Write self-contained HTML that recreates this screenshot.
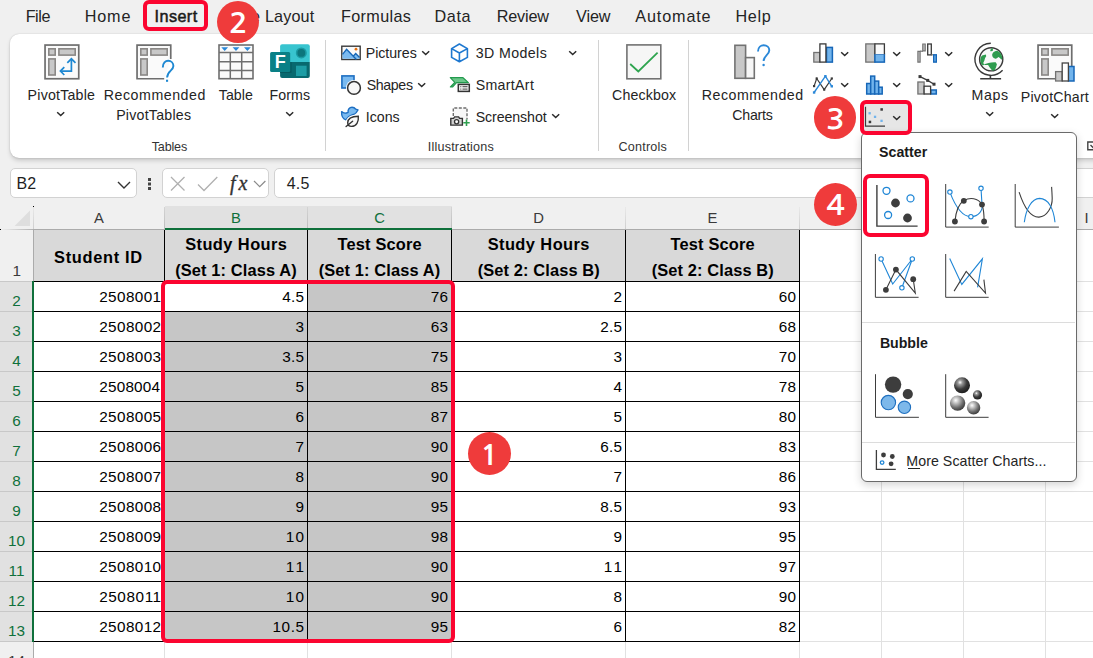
<!DOCTYPE html>
<html><head><meta charset="utf-8"><title>Excel</title>
<style>
html,body{margin:0;padding:0}
body{width:1093px;height:658px;overflow:hidden;position:relative;background:#f0f0f0;font-family:"Liberation Sans",sans-serif;color:#242424}
.a{position:absolute}
.t{position:absolute;white-space:nowrap;line-height:1}
.badge{position:absolute;border-radius:50%;background:#ef3b3b;color:#fff;text-align:center;font-family:"Liberation Sans",sans-serif}
.badge b{position:absolute;left:0;right:0;top:1.8px;font-family:"NanumGothic","Liberation Sans",sans-serif;font-weight:bold;font-size:28.5px;transform:scaleX(1.09)}
.red{position:absolute;box-sizing:border-box;border:4px solid #fb0530;border-radius:6px}
</style></head><body>

<div class="a" style="left:10px;top:33.500px;width:1100px;height:124.700px;background:#fff;border-radius:9px;box-shadow:0 0 1.5px rgba(0,0,0,.22),0 3px 5px -1px rgba(0,0,0,.20)"></div>
<div class="a" style="left:325.0px;top:40px;width:1px;height:111px;background:#d2d2d2"></div>
<div class="a" style="left:598.0px;top:40px;width:1px;height:111px;background:#d2d2d2"></div>
<div class="a" style="left:688.0px;top:40px;width:1px;height:111px;background:#d2d2d2"></div>
<svg class="a" style="left:40px;top:40px" width="44" height="44" viewBox="40 40 44 44">
<rect x="45.05" y="45.050" width="33.700" height="33.700" fill="#fafafa" stroke="#6e6e6e" stroke-width="1.700"/>
<rect x="48.8" y="48.800" width="6.400" height="6.300" fill="#c8c8c8" stroke="#8a8886" stroke-width="1.600"/><rect x="58.9" y="48.800" width="16.300" height="6.300" fill="#c8c8c8" stroke="#8a8886" stroke-width="1.600"/><rect x="48.8" y="58.900" width="6.400" height="16.100" fill="#c8c8c8" stroke="#8a8886" stroke-width="1.600"/>
<path d="M71.4 59.500 V71.100 H60.800" fill="none" stroke="#1e88d2" stroke-width="1.700"/>
<path d="M67.3 62.900 L71.400 58.800 L75.500 62.900 M64.300 67.200 L60.400 71.100 L64.300 75" fill="none" stroke="#1e88d2" stroke-width="1.700"/>
</svg>
<svg class="a" style="left:56.3px;top:110.9px" width="10" height="6" viewBox="0 0 10 6"><path d="M1.2 1.2 L4.7 4.5 L8.2 1.2" fill="none" stroke="#2a2a2a" stroke-width="1.5"/></svg>
<svg class="a" style="left:132px;top:40px" width="48" height="48" viewBox="132 40 48 48">
<path d="M170.75 59 V45.050 H137.050 V78.750 H164.200" fill="#fafafa" stroke="#6e6e6e" stroke-width="1.700"/>
<rect x="140.8" y="48.800" width="6.400" height="6.300" fill="#c8c8c8" stroke="#8a8886" stroke-width="1.600"/><rect x="150.9" y="48.800" width="16.300" height="6.300" fill="#c8c8c8" stroke="#8a8886" stroke-width="1.600"/><rect x="140.8" y="58.900" width="6.400" height="16.100" fill="#c8c8c8" stroke="#8a8886" stroke-width="1.600"/>
<path d="M162.800 67.400 C162.800 63 165.500 60.800 168.200 60.800 C171.300 60.800 173.400 63.200 173.400 66 C173.400 70.500 167.100 71 167.100 77.600" fill="none" stroke="#1e88d2" stroke-width="1.900"/>
<rect x="166" y="79.700" width="2.100" height="2.100" fill="#1e88d2"/>
</svg>
<svg class="a" style="left:214px;top:40px" width="44" height="44" viewBox="214 40 44 44">
<rect x="219" y="45" width="34" height="33.700" fill="#fafafa" stroke="#6e6e6e" stroke-width="1.600"/>
<path d="M219 52.600 H253 M219 61.700 H253 M219 70.400 H253 M230.300 52.600 V78.700 M241.700 52.600 V78.700" stroke="#6e6e6e" stroke-width="1.500" fill="none"/>
<path d="M221.300 47.300 h6.800 l-3.400 3.600z M232.600 47.300 h6.800 l-3.400 3.600z M244 47.300 h6.800 l-3.400 3.600z" fill="#2b88d8"/>
</svg>
<svg class="a" style="left:268px;top:42px" width="46" height="40" viewBox="268 42 46 40">
<path d="M280.1 46.200 a2 2 0 0 1 2 -2 h25.700 a2 2 0 0 1 2 2 v15.800 h-29.700z" fill="#38c4cf"/>
<path d="M280.1 62 h29.700 v14.100 a2 2 0 0 1 -2 2 h-25.700 a2 2 0 0 1 -2 -2z" fill="#08696f"/>
<rect x="280.1" y="62" width="11.500" height="11" fill="#065a60"/>
<circle cx="301.300" cy="52.900" r="5.500" fill="#1a9aa3"/>
<circle cx="301.300" cy="52.900" r="3.900" fill="#0c757c"/>
<rect x="296" y="65.700" width="10.600" height="10.300" fill="#1d9da5"/>
<rect x="270.100" y="52.100" width="20.100" height="19.800" rx="1.500" fill="#0a8086"/>
<text x="280.300" y="68.200" font-family="Liberation Sans, sans-serif" font-weight="bold" font-size="18" fill="#fff" text-anchor="middle">F</text>
</svg>
<svg class="a" style="left:284.7px;top:110.9px" width="10" height="6" viewBox="0 0 10 6"><path d="M1.2 1.2 L4.7 4.5 L8.2 1.2" fill="none" stroke="#2a2a2a" stroke-width="1.5"/></svg>
<svg class="a" style="left:339px;top:43px" width="24" height="20" viewBox="339 43 24 20">
<rect x="341.8" y="46.200" width="18.400" height="13.300" fill="#fafafa" stroke="#3a3a3a" stroke-width="1.400"/>
<path d="M342.5 54.400 L346.600 49.300 L353.600 56.600 L355.700 53.600 L359.500 57.600 V58.800 H342.500z" fill="#7abaf0"/>
<path d="M342.5 54.400 L346.600 49.300 L356.400 59.400 M353.200 56.200 L355.700 53.500 L359.600 57.500" fill="none" stroke="#1667b7" stroke-width="1.400"/>
<circle cx="356" cy="49.200" r="1.400" fill="#e8700f"/>
</svg>
<svg class="a" style="left:421.0px;top:49.6px" width="10" height="6" viewBox="0 0 10 6"><path d="M1.2 1.2 L4.7 4.5 L8.2 1.2" fill="none" stroke="#2a2a2a" stroke-width="1.5"/></svg>
<svg class="a" style="left:339px;top:73px" width="24" height="24" viewBox="339 73 24 24">
<rect x="341.9" y="75.900" width="12.100" height="12.100" fill="#7abaf0" stroke="#1e6fc2" stroke-width="1.600"/>
<circle cx="354" cy="87.900" r="8" fill="#fff"/>
<circle cx="354" cy="87.900" r="6.400" fill="#f7f7f7" stroke="#333" stroke-width="1.500"/>
</svg>
<svg class="a" style="left:417.0px;top:81.6px" width="10" height="6" viewBox="0 0 10 6"><path d="M1.2 1.2 L4.7 4.5 L8.2 1.2" fill="none" stroke="#2a2a2a" stroke-width="1.5"/></svg>
<svg class="a" style="left:339px;top:104px" width="24" height="26" viewBox="339 104 24 26">
<path d="M341.6 111.600 C343 113 345.500 113.600 348.100 112.300 C347.600 109.500 349.500 107.300 352 107.300 C353.800 107.300 355 108.200 355.800 109.200 L358 109.900 L356.200 112.600 C355.300 113.600 354 114.300 352.500 114.700 C350 115.500 347.500 117 345.800 119.800 C343 119 341.400 116.500 341.600 111.600z" fill="#7abaf0" stroke="#1e6fc2" stroke-width="1.400" stroke-linejoin="round"/>
<path d="M358.300 116.300 C358.900 121.500 356.500 126.400 351.500 126.400 C349 126.400 347.700 125.200 347.700 122.800 C347.700 118.500 352.500 116.500 358.300 116.300z" fill="#fff" stroke="#fff" stroke-width="3.500"/>
<path d="M358.300 116.300 C358.900 121.500 356.500 126.400 351.500 126.400 C349 126.400 347.700 125.200 347.700 122.800 C347.700 118.500 352.500 116.500 358.300 116.300z M346.100 126.500 L352.600 121.200" fill="#fafafa" stroke="#333" stroke-width="1.400" stroke-linecap="round"/>
</svg>
<svg class="a" style="left:448px;top:41px" width="23" height="24" viewBox="448 41 23 24">
<path d="M459.4 44 L467.400 48.600 V57.400 L459.400 61.800 L451.600 57.400 V48.600z M451.600 48.600 L459.400 53 L467.400 48.600 M459.400 53 V61.800" fill="#fff" stroke="#1e78d0" stroke-width="1.600" stroke-linejoin="round"/>
</svg>
<svg class="a" style="left:568.4px;top:50.1px" width="10" height="6" viewBox="0 0 10 6"><path d="M1.2 1.2 L4.7 4.5 L8.2 1.2" fill="none" stroke="#2a2a2a" stroke-width="1.5"/></svg>
<svg class="a" style="left:448px;top:74px" width="25" height="22" viewBox="448 74 25 22">
<path d="M450.300 77.700 H463 L468.400 82.600 H456.500 L452.500 87 H450.400 L454.800 82.300z" fill="#6cc78a" stroke="#239a4e" stroke-width="1.200" stroke-linejoin="round"/>
<rect x="458.300" y="84.400" width="11" height="7" fill="#f2f2f2" stroke="#333" stroke-width="1.500"/>
<path d="M460.300 86.700 h1 M462.500 86.700 h5 M460.300 89.100 h1 M462.500 89.100 h5" stroke="#444" stroke-width="1"/>
</svg>
<svg class="a" style="left:448px;top:104px" width="25" height="26" viewBox="448 104 25 26">
<path d="M453.300 116 V108 H467 V119.500" fill="#f7f7f7" stroke="#6e6e6e" stroke-width="1.400" stroke-dasharray="3 1.500"/>
<path d="M450.800 118.400 h2.800 l1 -1.500 h4 l1 1.500 h2.800 v6.700 h-11.600z" fill="#d2d2d2" stroke="#333" stroke-width="1.400"/>
<circle cx="456.600" cy="121.800" r="2.100" fill="#fff" stroke="#333" stroke-width="1.300"/>
<path d="M466.500 119.600 v6.400 M463.300 122.800 h6.400" stroke="#2e9f4f" stroke-width="1.600"/>
</svg>
<svg class="a" style="left:551.0px;top:113.2px" width="10" height="6" viewBox="0 0 10 6"><path d="M1.2 1.2 L4.7 4.5 L8.2 1.2" fill="none" stroke="#2a2a2a" stroke-width="1.5"/></svg>
<svg class="a" style="left:622px;top:40px" width="44" height="44" viewBox="622 40 44 44">
<rect x="626.9" y="44.900" width="33.900" height="33.900" fill="#f6f6f6" stroke="#727272" stroke-width="1.600"/>
<path d="M630.2 64 L638.3 71.4 L657.6 52.7" fill="none" stroke="#2ea44f" stroke-width="1.800"/>
</svg>
<svg class="a" style="left:730px;top:40px" width="44" height="44" viewBox="730 40 44 44">
<rect x="734.9" y="45.300" width="10.700" height="33" fill="#c8c8c8" stroke="#727272" stroke-width="1.600"/>
<rect x="745.6" y="57.600" width="8.700" height="20.700" fill="#f6f6f6" stroke="#727272" stroke-width="1.600"/>
<path d="M758 51.5 C758 47 761.2 45.3 763.7 45.3 C767 45.3 769.3 47.5 769.3 50.3 C769.3 54.8 763.6 55.5 763.6 61" fill="none" stroke="#2b88d8" stroke-width="1.900"/>
<circle cx="763.6" cy="65" r="1.2" fill="#2b88d8"/>
</svg>
<svg class="a" style="left:811px;top:41px" width="26" height="24" viewBox="811 41 26 24">
<rect x="813.8" y="52.500" width="6" height="9.600" fill="#c8c8c8" stroke="#727272" stroke-width="1.300"/>
<rect x="826.5" y="47.400" width="5.900" height="14.700" fill="#72b4ec" stroke="#1767b8" stroke-width="1.500"/>
<rect x="819.9" y="43.900" width="6" height="18.200" fill="#fff" stroke="#3a3a3a" stroke-width="1.300"/>
</svg>
<svg class="a" style="left:839.7px;top:50.9px" width="10" height="6" viewBox="0 0 10 6"><path d="M1.2 1.2 L4.7 4.5 L8.2 1.2" fill="none" stroke="#2a2a2a" stroke-width="1.5"/></svg>
<svg class="a" style="left:863px;top:41px" width="26" height="24" viewBox="863 41 26 24">
<rect x="865.8" y="43.900" width="9.100" height="18.200" fill="#c8c8c8" stroke="#727272" stroke-width="1.300"/>
<rect x="874.9" y="54.200" width="9.500" height="7.900" fill="#72b4ec" stroke="#1767b8" stroke-width="1.500"/>
<path d="M874.9 54.200 V43.900 H884.400 V54.200" fill="#fafafa" stroke="#3a3a3a" stroke-width="1.300"/>
</svg>
<svg class="a" style="left:891.6px;top:50.9px" width="10" height="6" viewBox="0 0 10 6"><path d="M1.2 1.2 L4.7 4.5 L8.2 1.2" fill="none" stroke="#2a2a2a" stroke-width="1.5"/></svg>
<svg class="a" style="left:915px;top:41px" width="26" height="24" viewBox="915 41 26 24">
<path d="M917.9 62.100 V51.300 H920.100 V62.100z" fill="#c8c8c8" stroke="#727272" stroke-width="1.200"/>
<path d="M920 51.200 H923" fill="none" stroke="#727272" stroke-width="1.200"/>
<path d="M922.8 44 H925.200 V50.800 H922.800z" fill="#c8c8c8" stroke="#727272" stroke-width="1.200"/>
<rect x="927.7" y="44" width="3.600" height="10.900" fill="#fafafa" stroke="#3a3a3a" stroke-width="1.300"/>
<path d="M931.300 54.800 H933.600" stroke="#727272" stroke-width="1.200"/>
<rect x="933.7" y="54.800" width="2.600" height="7.300" fill="#72b4ec" stroke="#1767b8" stroke-width="1.400"/>
</svg>
<svg class="a" style="left:943.6px;top:50.9px" width="10" height="6" viewBox="0 0 10 6"><path d="M1.2 1.2 L4.7 4.5 L8.2 1.2" fill="none" stroke="#2a2a2a" stroke-width="1.5"/></svg>
<svg class="a" style="left:811px;top:73px" width="26" height="24" viewBox="811 73 26 24">
<path d="M814.1 86.100 L816.700 78.500 L824.200 89.600 L831.800 78.500" fill="none" stroke="#3a3a3a" stroke-width="1.200"/>
<path d="M814.1 92.500 L825.400 76.200 L831.800 86.300" fill="none" stroke="#2b88d8" stroke-width="1.400"/>
<g fill="#3a3a3a"><rect x="813" y="85" width="2.200" height="2.200"/><rect x="815.600" y="77.400" width="2.200" height="2.200"/><rect x="823.100" y="88.500" width="2.200" height="2.200"/><rect x="830.700" y="77.400" width="2.200" height="2.200"/></g>
<g fill="#2b88d8"><rect x="812.900" y="91.300" width="2.400" height="2.400"/><rect x="824.200" y="75" width="2.400" height="2.400"/><rect x="830.600" y="85.100" width="2.400" height="2.400"/></g>
</svg>
<svg class="a" style="left:839.7px;top:82.4px" width="10" height="6" viewBox="0 0 10 6"><path d="M1.2 1.2 L4.7 4.5 L8.2 1.2" fill="none" stroke="#2a2a2a" stroke-width="1.5"/></svg>
<svg class="a" style="left:863px;top:73px" width="26" height="24" viewBox="863 73 26 24">
<g fill="#72b4ec" stroke="#1767b8" stroke-width="1.500"><rect x="866.7" y="83.500" width="4" height="10.500"/><rect x="870.700" y="76.100" width="4" height="17.900"/><rect x="874.700" y="81.100" width="4" height="12.900"/><rect x="878.700" y="87.200" width="3.500" height="6.800"/></g>
</svg>
<svg class="a" style="left:891.6px;top:82.4px" width="10" height="6" viewBox="0 0 10 6"><path d="M1.2 1.2 L4.7 4.5 L8.2 1.2" fill="none" stroke="#2a2a2a" stroke-width="1.5"/></svg>
<svg class="a" style="left:915px;top:73px" width="26" height="24" viewBox="915 73 26 24">
<rect x="917.9" y="82" width="6.200" height="12" fill="#c8c8c8" stroke="#727272" stroke-width="1.300"/>
<rect x="930.800" y="90" width="5.500" height="4" fill="#72b4ec" stroke="#1767b8" stroke-width="1.500"/>
<rect x="924.100" y="86.200" width="6.500" height="7.800" fill="#fafafa" stroke="#3a3a3a" stroke-width="1.300"/>
<path d="M920 76.600 L927.700 80.400 L934 84.200" fill="none" stroke="#3a3a3a" stroke-width="1.200"/>
<g fill="#3a3a3a"><rect x="918.500" y="75.100" width="3" height="3"/><rect x="926.200" y="78.900" width="3" height="3"/><rect x="932.500" y="82.700" width="3" height="3"/></g>
</svg>
<svg class="a" style="left:943.6px;top:82.4px" width="10" height="6" viewBox="0 0 10 6"><path d="M1.2 1.2 L4.7 4.5 L8.2 1.2" fill="none" stroke="#2a2a2a" stroke-width="1.5"/></svg>
<div class="a" style="left:861px;top:101px;width:49px;height:33px;background:#e6e6e6;border-radius:4px"></div>
<svg class="a" style="left:863px;top:104px" width="26" height="26" viewBox="863 104 26 26">
<path d="M865.5 106.800 V126.200 H885" fill="none" stroke="#3a3a3a" stroke-width="1.200"/>
<g fill="#3a3a3a"><rect x="880.400" y="108.200" width="2.500" height="2.500"/><rect x="868.700" y="120.700" width="2.500" height="2.500"/></g>
<g fill="#72b4ec"><rect x="868.500" y="112.100" width="2.300" height="2.300"/><rect x="873.900" y="115.700" width="2.300" height="2.300"/><rect x="880.400" y="119.700" width="2.300" height="2.300"/></g>
</svg>
<svg class="a" style="left:891.8px;top:114.6px" width="10" height="6" viewBox="0 0 10 6"><path d="M1.2 1.2 L4.7 4.5 L8.2 1.2" fill="none" stroke="#2a2a2a" stroke-width="1.5"/></svg>
<svg class="a" style="left:972px;top:40px" width="36" height="42" viewBox="972 40 36 42">
<circle cx="991.2" cy="59.300" r="11.600" fill="#f8f8f8" stroke="#3a3a3a" stroke-width="1.400"/>
<g fill="#2e9b4e"><path d="M982.1 55.600 L985.900 54.600 L986.200 56.200 L985.100 58.100 L984.300 60.800 L983.200 63.100 L984.300 64.600 L982.800 65.400 L980.900 63.500 L980.300 60 L980.900 57z"/>
<path d="M993.100 52.400 Q995.500 50.500 997.600 50.900 Q999.800 51.600 1000.700 53.200 Q1002.300 55.800 1002.400 58.500 L1001.400 59.700 Q1000 57.500 998.400 57 Q996.800 58.800 995.400 58.700 Q993.500 58.300 992.700 57 Q992 55.500 992.200 54.300z"/>
<path d="M991.200 48.600 L992.700 48.300 L993.100 50.500 L990.800 51.500 L990.200 50.200z"/>
<path d="M984.300 64.200 L988.500 63.100 Q992 62 995.700 62.300 L996.900 64.200 L996.100 67.300 L994.600 70.300 L992.300 70.700 L989.700 67.600 L988.100 65 L984.300 65z"/></g>
<path d="M990.800 43.300 A16 16 0 1 0 1002.600 70.300" fill="none" stroke="#3a3a3a" stroke-width="1.400"/>
<path d="M990.400 75.200 V78.800 M980.200 78.800 H1001.100" stroke="#3a3a3a" stroke-width="1.600"/>
</svg>
<svg class="a" style="left:984.8px;top:110.7px" width="10" height="6" viewBox="0 0 10 6"><path d="M1.2 1.2 L4.7 4.5 L8.2 1.2" fill="none" stroke="#2a2a2a" stroke-width="1.5"/></svg>
<svg class="a" style="left:1033px;top:40px" width="46" height="46" viewBox="1033 40 46 46">
<path d="M1055 78.750 H1038.050 V45.050 H1071.750 V66" fill="#fafafa" stroke="#6e6e6e" stroke-width="1.700"/>
<rect x="1041.8" y="48.800" width="6.400" height="6.300" fill="#c8c8c8" stroke="#8a8886" stroke-width="1.600"/><rect x="1051.9" y="48.800" width="16.300" height="6.300" fill="#c8c8c8" stroke="#8a8886" stroke-width="1.600"/><rect x="1041.8" y="58.900" width="6.400" height="16.100" fill="#c8c8c8" stroke="#8a8886" stroke-width="1.600"/>
<rect x="1055.6" y="71.600" width="6.600" height="9.400" fill="#c8c8c8" stroke="#727272" stroke-width="1.300"/>
<rect x="1068.4" y="66.500" width="5.600" height="14.500" fill="#72b4ec" stroke="#1767b8" stroke-width="1.500"/>
<rect x="1062.2" y="63" width="6.200" height="18" fill="#fff" stroke="#444" stroke-width="1.300"/>
</svg>
<svg class="a" style="left:1049.6px;top:112.5px" width="10" height="6" viewBox="0 0 10 6"><path d="M1.2 1.2 L4.7 4.5 L8.2 1.2" fill="none" stroke="#2a2a2a" stroke-width="1.5"/></svg>
<svg class="a" style="left:1086px;top:140px" width="8" height="12" viewBox="0 0 8 12"><path d="M8 2 H1.800 V9.800 H8 M4.500 5 L8 8.500" fill="none" stroke="#444" stroke-width="1.4"/></svg>
<div class="t" style="left:27.60px;top:87.90px;font-size:14.2px;letter-spacing:0.215px;">PivotTable</div>
<div class="t" style="left:103.80px;top:87.90px;font-size:14.2px;letter-spacing:0.528px;">Recommended</div>
<div class="t" style="left:116.20px;top:107.90px;font-size:14.2px;letter-spacing:0.224px;">PivotTables</div>
<div class="t" style="left:218.80px;top:87.90px;font-size:14.2px;letter-spacing:0.019px;">Table</div>
<div class="t" style="left:269.60px;top:87.90px;font-size:14.2px;letter-spacing:0.075px;">Forms</div>
<div class="t" style="left:151.70px;top:140.70px;font-size:12.6px;letter-spacing:-0.181px;color:#333;">Tables</div>
<div class="t" style="left:365.70px;top:45.90px;font-size:14.2px;letter-spacing:-0.022px;">Pictures</div>
<div class="t" style="left:366.70px;top:77.90px;font-size:14.2px;letter-spacing:-0.365px;">Shapes</div>
<div class="t" style="left:365.70px;top:109.90px;font-size:14.2px;letter-spacing:0.021px;">Icons</div>
<div class="t" style="left:475.70px;top:45.90px;font-size:14.2px;letter-spacing:0.410px;">3D Models</div>
<div class="t" style="left:475.70px;top:77.90px;font-size:14.2px;letter-spacing:0.311px;">SmartArt</div>
<div class="t" style="left:475.70px;top:109.90px;font-size:14.2px;letter-spacing:-0.092px;">Screenshot</div>
<div class="t" style="left:427.80px;top:140.70px;font-size:12.6px;letter-spacing:0.192px;color:#333;">Illustrations</div>
<div class="t" style="left:612.10px;top:87.90px;font-size:14.2px;letter-spacing:0.115px;">Checkbox</div>
<div class="t" style="left:618.60px;top:140.70px;font-size:12.6px;letter-spacing:0.186px;color:#333;">Controls</div>
<div class="t" style="left:701.70px;top:87.90px;font-size:14.2px;letter-spacing:0.528px;">Recommended</div>
<div class="t" style="left:732.30px;top:107.90px;font-size:14.2px;letter-spacing:-0.259px;">Charts</div>
<div class="t" style="left:971.60px;top:87.90px;font-size:14.2px;letter-spacing:0.634px;">Maps</div>
<div class="t" style="left:1020.80px;top:89.90px;font-size:14.2px;letter-spacing:0.190px;">PivotChart</div>
<div class="a" style="left:10px;top:168px;width:127px;height:30px;background:#fff;box-sizing:border-box;border:1px solid #d2d2d2;border-radius:5px"></div>
<svg class="a" style="left:116px;top:179px" width="16" height="11" viewBox="0 0 16 11"><path d="M2 3 L8 9 L14 3" fill="none" stroke="#333" stroke-width="1.4"/></svg>
<div class="a" style="left:147.5px;top:177.500px;width:3px;height:3px;background:#444;box-shadow:0 4.500px 0 #444,0 9px 0 #444"></div>
<div class="a" style="left:162px;top:168px;width:107px;height:30px;background:#fff;box-sizing:border-box;border:1px solid #d2d2d2;border-radius:5px"></div>
<svg class="a" style="left:168px;top:174px" width="100" height="18" viewBox="168 174 100 18"><path d="M171 177 L184.500 190.500 M184.500 177 L171 190.500" stroke="#b0b0b0" stroke-width="1.300" fill="none"/><path d="M198 184.500 L204 190.500 L217.300 177" stroke="#b0b0b0" stroke-width="1.300" fill="none"/><path d="M254 181 L259.700 186.700 L265.400 181" stroke="#8a8a8a" stroke-width="1.200" fill="none"/></svg>
<div class="a" style="left:274px;top:168px;width:840px;height:30px;background:#fff;box-sizing:border-box;border:1px solid #d2d2d2;border-radius:5px"></div>
<div class="a" style="left:0px;top:206px;width:1093px;height:452px;background:#fff"></div>
<div class="a" style="left:0px;top:206px;width:1093px;height:24px;background:#f0f0f0"></div>
<div class="a" style="left:0px;top:206px;width:34px;height:452px;background:#f0f0f0"></div>
<div class="a" style="left:165px;top:206px;width:287px;height:24px;background:#e1e1e1"></div>
<div class="a" style="left:0px;top:282px;width:33px;height:360px;background:#e1e1e1"></div>
<svg class="a" style="left:13px;top:209px" width="18" height="18" viewBox="0 0 18 18"><path d="M17 1.600 L17 17 L1.600 17 Z" fill="#dedede"/></svg>
<div class="t" style="left:34px;top:210.87px;width:130px;text-align:center;font-size:14.800px;color:#3a3a3a">A</div>
<div class="t" style="left:165px;top:210.87px;width:142px;text-align:center;font-size:14.800px;color:#0f703b">B</div>
<div class="t" style="left:308px;top:210.87px;width:143px;text-align:center;font-size:14.800px;color:#0f703b">C</div>
<div class="t" style="left:452px;top:210.87px;width:173px;text-align:center;font-size:14.800px;color:#3a3a3a">D</div>
<div class="t" style="left:626px;top:210.87px;width:173px;text-align:center;font-size:14.800px;color:#3a3a3a">E</div>
<div class="t" style="left:800px;top:210.87px;width:81px;text-align:center;font-size:14.800px;color:#3a3a3a">F</div>
<div class="t" style="left:882px;top:210.87px;width:81px;text-align:center;font-size:14.800px;color:#3a3a3a">G</div>
<div class="t" style="left:964px;top:210.87px;width:81px;text-align:center;font-size:14.800px;color:#3a3a3a">H</div>
<div class="t" style="left:1046px;top:210.87px;width:81px;text-align:center;font-size:14.800px;color:#3a3a3a">I</div>
<div class="a" style="left:33px;top:207px;width:1px;height:22px;background:linear-gradient(180deg,#e9e9e9,#cfcfcf)"></div>
<div class="a" style="left:164px;top:207px;width:1px;height:22px;background:linear-gradient(180deg,#d4d4d4,#bdbdbd)"></div>
<div class="a" style="left:307px;top:207px;width:1px;height:22px;background:linear-gradient(180deg,#d4d4d4,#bdbdbd)"></div>
<div class="a" style="left:451px;top:207px;width:1px;height:22px;background:linear-gradient(180deg,#d4d4d4,#bdbdbd)"></div>
<div class="a" style="left:625px;top:207px;width:1px;height:22px;background:linear-gradient(180deg,#e9e9e9,#cfcfcf)"></div>
<div class="a" style="left:799px;top:207px;width:1px;height:22px;background:linear-gradient(180deg,#e9e9e9,#cfcfcf)"></div>
<div class="a" style="left:881px;top:207px;width:1px;height:22px;background:linear-gradient(180deg,#e9e9e9,#cfcfcf)"></div>
<div class="a" style="left:963px;top:207px;width:1px;height:22px;background:linear-gradient(180deg,#e9e9e9,#cfcfcf)"></div>
<div class="a" style="left:1045px;top:207px;width:1px;height:22px;background:linear-gradient(180deg,#e9e9e9,#cfcfcf)"></div>
<div class="a" style="left:1127px;top:207px;width:1px;height:22px;background:linear-gradient(180deg,#e9e9e9,#cfcfcf)"></div>
<div class="a" style="left:33px;top:229px;width:1060px;height:1px;background:#ababab"></div>
<div class="a" style="left:0px;top:229px;width:33px;height:1px;background:linear-gradient(90deg,rgba(171,171,171,0),rgba(171,171,171,.9))"></div>
<div class="a" style="left:33px;top:206px;width:1px;height:1px;background:#000"></div>
<div class="a" style="left:0px;top:229px;width:1px;height:1px;background:#000"></div>
<div class="a" style="left:881px;top:230px;width:1px;height:428px;background:#e1e1e1"></div>
<div class="a" style="left:963px;top:230px;width:1px;height:428px;background:#e1e1e1"></div>
<div class="a" style="left:1045px;top:230px;width:1px;height:428px;background:#e1e1e1"></div>
<div class="a" style="left:1127px;top:230px;width:1px;height:428px;background:#e1e1e1"></div>
<div class="a" style="left:164px;top:642px;width:1px;height:16px;background:#e1e1e1"></div>
<div class="a" style="left:307px;top:642px;width:1px;height:16px;background:#e1e1e1"></div>
<div class="a" style="left:451px;top:642px;width:1px;height:16px;background:#e1e1e1"></div>
<div class="a" style="left:625px;top:642px;width:1px;height:16px;background:#e1e1e1"></div>
<div class="a" style="left:799px;top:642px;width:1px;height:16px;background:#e1e1e1"></div>
<div class="a" style="left:800px;top:281px;width:293px;height:1px;background:#e1e1e1"></div>
<div class="a" style="left:800px;top:311px;width:293px;height:1px;background:#e1e1e1"></div>
<div class="a" style="left:800px;top:341px;width:293px;height:1px;background:#e1e1e1"></div>
<div class="a" style="left:800px;top:371px;width:293px;height:1px;background:#e1e1e1"></div>
<div class="a" style="left:800px;top:401px;width:293px;height:1px;background:#e1e1e1"></div>
<div class="a" style="left:800px;top:431px;width:293px;height:1px;background:#e1e1e1"></div>
<div class="a" style="left:800px;top:461px;width:293px;height:1px;background:#e1e1e1"></div>
<div class="a" style="left:800px;top:491px;width:293px;height:1px;background:#e1e1e1"></div>
<div class="a" style="left:800px;top:521px;width:293px;height:1px;background:#e1e1e1"></div>
<div class="a" style="left:800px;top:551px;width:293px;height:1px;background:#e1e1e1"></div>
<div class="a" style="left:800px;top:581px;width:293px;height:1px;background:#e1e1e1"></div>
<div class="a" style="left:800px;top:611px;width:293px;height:1px;background:#e1e1e1"></div>
<div class="a" style="left:800px;top:641px;width:293px;height:1px;background:#e1e1e1"></div>
<div class="a" style="left:33px;top:230px;width:1px;height:52px;background:#ababab"></div>
<div class="a" style="left:33px;top:642px;width:1px;height:16px;background:#ababab"></div>
<div class="a" style="left:0px;top:281px;width:33px;height:1px;background:#c8c8c8"></div>
<div class="t" style="left:0;top:292.85px;width:33px;text-align:center;font-size:15.3px;color:#0f703b">2</div>
<div class="a" style="left:0px;top:311px;width:33px;height:1px;background:#c8c8c8"></div>
<div class="t" style="left:0;top:322.85px;width:33px;text-align:center;font-size:15.3px;color:#0f703b">3</div>
<div class="a" style="left:0px;top:341px;width:33px;height:1px;background:#c8c8c8"></div>
<div class="t" style="left:0;top:352.85px;width:33px;text-align:center;font-size:15.3px;color:#0f703b">4</div>
<div class="a" style="left:0px;top:371px;width:33px;height:1px;background:#c8c8c8"></div>
<div class="t" style="left:0;top:382.85px;width:33px;text-align:center;font-size:15.3px;color:#0f703b">5</div>
<div class="a" style="left:0px;top:401px;width:33px;height:1px;background:#c8c8c8"></div>
<div class="t" style="left:0;top:412.85px;width:33px;text-align:center;font-size:15.3px;color:#0f703b">6</div>
<div class="a" style="left:0px;top:431px;width:33px;height:1px;background:#c8c8c8"></div>
<div class="t" style="left:0;top:442.85px;width:33px;text-align:center;font-size:15.3px;color:#0f703b">7</div>
<div class="a" style="left:0px;top:461px;width:33px;height:1px;background:#c8c8c8"></div>
<div class="t" style="left:0;top:472.85px;width:33px;text-align:center;font-size:15.3px;color:#0f703b">8</div>
<div class="a" style="left:0px;top:491px;width:33px;height:1px;background:#c8c8c8"></div>
<div class="t" style="left:0;top:502.85px;width:33px;text-align:center;font-size:15.3px;color:#0f703b">9</div>
<div class="a" style="left:0px;top:521px;width:33px;height:1px;background:#c8c8c8"></div>
<div class="t" style="left:0;top:532.85px;width:33px;text-align:center;font-size:15.3px;color:#0f703b">10</div>
<div class="a" style="left:0px;top:551px;width:33px;height:1px;background:#c8c8c8"></div>
<div class="t" style="left:0;top:562.85px;width:33px;text-align:center;font-size:15.3px;color:#0f703b">11</div>
<div class="a" style="left:0px;top:581px;width:33px;height:1px;background:#c8c8c8"></div>
<div class="t" style="left:0;top:592.85px;width:33px;text-align:center;font-size:15.3px;color:#0f703b">12</div>
<div class="a" style="left:0px;top:611px;width:33px;height:1px;background:#c8c8c8"></div>
<div class="t" style="left:0;top:622.85px;width:33px;text-align:center;font-size:15.3px;color:#0f703b">13</div>
<div class="a" style="left:0px;top:641px;width:33px;height:1px;background:#c8c8c8"></div>
<div class="t" style="left:0;top:652.85px;width:33px;text-align:center;font-size:15.3px;color:#3a3a3a">14</div>
<div class="a" style="left:34px;top:230px;width:765px;height:51px;background:#d9d9d9"></div>
<div class="a" style="left:165px;top:282px;width:286px;height:359px;background:#c6c6c6"></div>
<div class="a" style="left:165px;top:282px;width:142px;height:29px;background:#fff"></div>
<!--CELLTEXT-->
<div class="a" style="left:164px;top:230px;width:1px;height:412px;background:#000"></div>
<div class="a" style="left:307px;top:230px;width:1px;height:412px;background:#000"></div>
<div class="a" style="left:451px;top:230px;width:1px;height:412px;background:#000"></div>
<div class="a" style="left:625px;top:230px;width:1px;height:412px;background:#000"></div>
<div class="a" style="left:799px;top:230px;width:1px;height:412px;background:#000"></div>
<div class="a" style="left:34px;top:281px;width:766px;height:1px;background:#000"></div>
<div class="a" style="left:34px;top:311px;width:766px;height:1px;background:#000"></div>
<div class="a" style="left:34px;top:341px;width:766px;height:1px;background:#000"></div>
<div class="a" style="left:34px;top:371px;width:766px;height:1px;background:#000"></div>
<div class="a" style="left:34px;top:401px;width:766px;height:1px;background:#000"></div>
<div class="a" style="left:34px;top:431px;width:766px;height:1px;background:#000"></div>
<div class="a" style="left:34px;top:461px;width:766px;height:1px;background:#000"></div>
<div class="a" style="left:34px;top:491px;width:766px;height:1px;background:#000"></div>
<div class="a" style="left:34px;top:521px;width:766px;height:1px;background:#000"></div>
<div class="a" style="left:34px;top:551px;width:766px;height:1px;background:#000"></div>
<div class="a" style="left:34px;top:581px;width:766px;height:1px;background:#000"></div>
<div class="a" style="left:34px;top:611px;width:766px;height:1px;background:#000"></div>
<div class="a" style="left:34px;top:641px;width:766px;height:1px;background:#000"></div>
<div class="a" style="left:32px;top:281px;width:2px;height:361px;background:#0f703b"></div>
<div class="a" style="left:165px;top:228px;width:287px;height:2px;background:#0f703b"></div>
<div class="t" style="left:25.70px;top:7.90px;font-size:16.2px;letter-spacing:-0.460px;">File</div>
<div class="t" style="left:84.80px;top:7.90px;font-size:16.2px;letter-spacing:0.808px;">Home</div>
<div class="t" style="left:154.50px;top:7.90px;font-size:16.2px;letter-spacing:0.443px;color:#1a1a1a;-webkit-text-stroke:0.5px #1a1a1a;">Insert</div>
<div class="t" style="left:265.00px;top:7.90px;font-size:16.2px;letter-spacing:0.119px;">Layout</div>
<div class="t" style="left:341.00px;top:7.90px;font-size:16.2px;letter-spacing:0.348px;">Formulas</div>
<div class="t" style="left:434.40px;top:7.90px;font-size:16.2px;letter-spacing:0.670px;">Data</div>
<div class="t" style="left:496.70px;top:7.90px;font-size:16.2px;letter-spacing:-0.157px;">Review</div>
<div class="t" style="left:576.00px;top:7.90px;font-size:16.2px;letter-spacing:-0.101px;">View</div>
<div class="t" style="left:635.30px;top:7.90px;font-size:16.2px;letter-spacing:0.859px;">Automate</div>
<div class="t" style="left:735.40px;top:7.90px;font-size:16.2px;letter-spacing:0.704px;">Help</div>
<div class="t" style="left:251.00px;top:7.90px;font-size:16.2px;letter-spacing:-0.500px;">e</div>
<div class="t" style="left:16.50px;top:175.50px;font-size:16px;letter-spacing:0.028px;color:#1f1f1f;">B2</div>
<div class="t" style="left:230.00px;top:172.80px;font-size:20px;font-style:italic;letter-spacing:3.043px;color:#333;font-family:'Liberation Serif',serif;-webkit-text-stroke:0.35px #333;">fx</div>
<div class="t" style="left:286.80px;top:175.50px;font-size:16px;letter-spacing:0.178px;color:#1f1f1f;">4.5</div>
<div class="t" style="left:12.60px;top:262.85px;font-size:15.3px;color:#3a3a3a;">1</div>
<div class="t" style="left:54.10px;top:248.80px;font-size:16.4px;font-weight:bold;letter-spacing:0.677px;color:#000;">Student ID</div>
<div class="t" style="left:185.15px;top:235.80px;font-size:16.4px;font-weight:bold;letter-spacing:0.438px;color:#000;">Study Hours</div>
<div class="t" style="left:175.25px;top:261.80px;font-size:16.4px;font-weight:bold;letter-spacing:0.115px;color:#000;">(Set 1: Class A)</div>
<div class="t" style="left:337.40px;top:235.80px;font-size:16.4px;font-weight:bold;letter-spacing:0.191px;color:#000;">Test Score</div>
<div class="t" style="left:318.75px;top:261.80px;font-size:16.4px;font-weight:bold;letter-spacing:0.115px;color:#000;">(Set 1: Class A)</div>
<div class="t" style="left:487.65px;top:235.80px;font-size:16.4px;font-weight:bold;letter-spacing:0.438px;color:#000;">Study Hours</div>
<div class="t" style="left:477.75px;top:261.80px;font-size:16.4px;font-weight:bold;letter-spacing:0.115px;color:#000;">(Set 2: Class B)</div>
<div class="t" style="left:670.40px;top:235.80px;font-size:16.4px;font-weight:bold;letter-spacing:0.191px;color:#000;">Test Score</div>
<div class="t" style="left:651.75px;top:261.80px;font-size:16.4px;font-weight:bold;letter-spacing:0.115px;color:#000;">(Set 2: Class B)</div>
<div class="t" style="left:99.20px;top:288.85px;font-size:15.3px;letter-spacing:0.393px;color:#000;">2508001</div>
<div class="t" style="left:282.30px;top:288.85px;font-size:15.3px;letter-spacing:0.271px;color:#000;">4.5</div>
<div class="t" style="left:430.70px;top:288.85px;font-size:15.3px;letter-spacing:0.393px;color:#000;">76</div>
<div class="t" style="left:613.60px;top:288.85px;font-size:15.3px;color:#000;">2</div>
<div class="t" style="left:778.70px;top:288.85px;font-size:15.3px;letter-spacing:0.393px;color:#000;">60</div>
<div class="t" style="left:99.20px;top:318.85px;font-size:15.3px;letter-spacing:0.393px;color:#000;">2508002</div>
<div class="t" style="left:295.60px;top:318.85px;font-size:15.3px;color:#000;">3</div>
<div class="t" style="left:430.70px;top:318.85px;font-size:15.3px;letter-spacing:0.393px;color:#000;">63</div>
<div class="t" style="left:600.30px;top:318.85px;font-size:15.3px;letter-spacing:0.271px;color:#000;">2.5</div>
<div class="t" style="left:778.70px;top:318.85px;font-size:15.3px;letter-spacing:0.393px;color:#000;">68</div>
<div class="t" style="left:99.20px;top:348.85px;font-size:15.3px;letter-spacing:0.393px;color:#000;">2508003</div>
<div class="t" style="left:282.30px;top:348.85px;font-size:15.3px;letter-spacing:0.271px;color:#000;">3.5</div>
<div class="t" style="left:430.70px;top:348.85px;font-size:15.3px;letter-spacing:0.393px;color:#000;">75</div>
<div class="t" style="left:613.60px;top:348.85px;font-size:15.3px;color:#000;">3</div>
<div class="t" style="left:778.70px;top:348.85px;font-size:15.3px;letter-spacing:0.393px;color:#000;">70</div>
<div class="t" style="left:99.20px;top:378.85px;font-size:15.3px;letter-spacing:0.226px;color:#000;">2508004</div>
<div class="t" style="left:295.60px;top:378.85px;font-size:15.3px;color:#000;">5</div>
<div class="t" style="left:430.70px;top:378.85px;font-size:15.3px;letter-spacing:0.393px;color:#000;">85</div>
<div class="t" style="left:613.60px;top:378.85px;font-size:15.3px;letter-spacing:-1.000px;color:#000;">4</div>
<div class="t" style="left:778.70px;top:378.85px;font-size:15.3px;letter-spacing:0.393px;color:#000;">78</div>
<div class="t" style="left:99.20px;top:408.85px;font-size:15.3px;letter-spacing:0.393px;color:#000;">2508005</div>
<div class="t" style="left:295.60px;top:408.85px;font-size:15.3px;color:#000;">6</div>
<div class="t" style="left:430.70px;top:408.85px;font-size:15.3px;letter-spacing:0.393px;color:#000;">87</div>
<div class="t" style="left:613.60px;top:408.85px;font-size:15.3px;color:#000;">5</div>
<div class="t" style="left:778.70px;top:408.85px;font-size:15.3px;letter-spacing:0.393px;color:#000;">80</div>
<div class="t" style="left:99.20px;top:438.85px;font-size:15.3px;letter-spacing:0.393px;color:#000;">2508006</div>
<div class="t" style="left:295.60px;top:438.85px;font-size:15.3px;color:#000;">7</div>
<div class="t" style="left:430.70px;top:438.85px;font-size:15.3px;letter-spacing:0.393px;color:#000;">90</div>
<div class="t" style="left:600.30px;top:438.85px;font-size:15.3px;letter-spacing:0.271px;color:#000;">6.5</div>
<div class="t" style="left:778.70px;top:438.85px;font-size:15.3px;letter-spacing:0.393px;color:#000;">83</div>
<div class="t" style="left:99.20px;top:468.85px;font-size:15.3px;letter-spacing:0.393px;color:#000;">2508007</div>
<div class="t" style="left:295.60px;top:468.85px;font-size:15.3px;color:#000;">8</div>
<div class="t" style="left:430.70px;top:468.85px;font-size:15.3px;letter-spacing:0.393px;color:#000;">90</div>
<div class="t" style="left:613.60px;top:468.85px;font-size:15.3px;color:#000;">7</div>
<div class="t" style="left:778.70px;top:468.85px;font-size:15.3px;letter-spacing:0.393px;color:#000;">86</div>
<div class="t" style="left:99.20px;top:498.85px;font-size:15.3px;letter-spacing:0.393px;color:#000;">2508008</div>
<div class="t" style="left:295.60px;top:498.85px;font-size:15.3px;color:#000;">9</div>
<div class="t" style="left:430.70px;top:498.85px;font-size:15.3px;letter-spacing:0.393px;color:#000;">95</div>
<div class="t" style="left:600.30px;top:498.85px;font-size:15.3px;letter-spacing:0.271px;color:#000;">8.5</div>
<div class="t" style="left:778.70px;top:498.85px;font-size:15.3px;letter-spacing:0.393px;color:#000;">93</div>
<div class="t" style="left:99.20px;top:528.85px;font-size:15.3px;letter-spacing:0.393px;color:#000;">2508009</div>
<div class="t" style="left:285.70px;top:528.85px;font-size:15.3px;letter-spacing:1.393px;color:#000;">10</div>
<div class="t" style="left:430.70px;top:528.85px;font-size:15.3px;letter-spacing:0.393px;color:#000;">98</div>
<div class="t" style="left:613.60px;top:528.85px;font-size:15.3px;color:#000;">9</div>
<div class="t" style="left:778.70px;top:528.85px;font-size:15.3px;letter-spacing:0.393px;color:#000;">95</div>
<div class="t" style="left:99.20px;top:558.85px;font-size:15.3px;letter-spacing:0.393px;color:#000;">2508010</div>
<div class="t" style="left:285.70px;top:558.85px;font-size:15.3px;letter-spacing:2.528px;color:#000;">11</div>
<div class="t" style="left:430.70px;top:558.85px;font-size:15.3px;letter-spacing:0.393px;color:#000;">90</div>
<div class="t" style="left:603.70px;top:558.85px;font-size:15.3px;letter-spacing:2.528px;color:#000;">11</div>
<div class="t" style="left:778.70px;top:558.85px;font-size:15.3px;letter-spacing:0.393px;color:#000;">97</div>
<div class="t" style="left:99.20px;top:588.85px;font-size:15.3px;letter-spacing:0.582px;color:#000;">2508011</div>
<div class="t" style="left:285.70px;top:588.85px;font-size:15.3px;letter-spacing:1.393px;color:#000;">10</div>
<div class="t" style="left:430.70px;top:588.85px;font-size:15.3px;letter-spacing:0.393px;color:#000;">90</div>
<div class="t" style="left:613.60px;top:588.85px;font-size:15.3px;color:#000;">8</div>
<div class="t" style="left:778.70px;top:588.85px;font-size:15.3px;letter-spacing:0.393px;color:#000;">90</div>
<div class="t" style="left:99.20px;top:618.85px;font-size:15.3px;letter-spacing:0.393px;color:#000;">2508012</div>
<div class="t" style="left:272.40px;top:618.85px;font-size:15.3px;letter-spacing:0.645px;color:#000;">10.5</div>
<div class="t" style="left:430.70px;top:618.85px;font-size:15.3px;letter-spacing:0.393px;color:#000;">95</div>
<div class="t" style="left:613.60px;top:618.85px;font-size:15.3px;color:#000;">6</div>
<div class="t" style="left:778.70px;top:618.85px;font-size:15.3px;letter-spacing:0.393px;color:#000;">82</div>
<div class="red" style="left:161.300px;top:280.200px;width:293.400px;height:363.300px"></div>
<div class="badge" style="left:468px;top:432px;width:43px;height:43px;line-height:43px"><b>1</b></div>
<div class="a" style="left:860.500px;top:132px;width:216px;height:350px;box-sizing:border-box;background:#fff;border:1px solid #6a6a6a;border-radius:6px;box-shadow:0 3px 9px rgba(0,0,0,.17)"></div>
<div class="a" style="left:862px;top:322px;width:213px;height:1px;background:#dcdcdc"></div>
<div class="a" style="left:862px;top:442px;width:213px;height:1px;background:#dcdcdc"></div>
<svg class="a" style="left:862px;top:176px" width="213" height="300" viewBox="862 176 213 300">
<path d="M876.9 185 V226.100 H917.6" fill="none" stroke="#3d3d3d" stroke-width="1.400"/>
<g fill="#fff" stroke="#1f86d6" stroke-width="1.300"><circle cx="886.5" cy="190.800" r="3.500"/><circle cx="910.5" cy="198.400" r="3.500"/><circle cx="888.1" cy="215" r="3.500"/></g>
<g fill="#3d3d3d"><circle cx="895.5" cy="203" r="4.400"/><circle cx="907.5" cy="218" r="4.400"/></g>
<path d="M945.7 184 V227.100 H988.700" fill="none" stroke="#3d3d3d" stroke-width="1"/>
<path d="M949.9 192.100 C954 203 961 216.500 970.900 216.700 C979 216.500 983 210 982 204.600 L981 188.300" fill="none" stroke="#1f86d6" stroke-width="1.100"/>
<path d="M954.9 221.500 C956 211 959 203.500 963.800 200.800 C970 197 978 198 982 204.600 C984 210 984.100 216 984.100 221.500" fill="none" stroke="#3d3d3d" stroke-width="1.100"/>
<g fill="#fff" stroke="#1f86d6" stroke-width="1.100"><circle cx="949.9" cy="192.100" r="2.200"/><circle cx="981" cy="188.300" r="2.200"/><circle cx="970.900" cy="216.700" r="2.200"/></g>
<g fill="#3d3d3d"><circle cx="963.800" cy="200.800" r="2.900"/><circle cx="982" cy="204.600" r="2.900"/><circle cx="954.900" cy="221.500" r="2.900"/><circle cx="984.100" cy="221.500" r="2.900"/></g>
<path d="M1015.2 184 V227.100 H1058.900" fill="none" stroke="#3d3d3d" stroke-width="1"/>
<path d="M1019.1 192.100 C1024 207 1031 217.500 1039 217.100 C1047 216.500 1052.500 207 1052.200 198 C1052 193 1051.800 190 1051.600 186.900" fill="none" stroke="#3d3d3d" stroke-width="1.100"/>
<path d="M1024.300 222.300 C1026 209 1031.500 198.600 1039.600 198.400 C1048 198.500 1053.500 208 1055 222.300" fill="none" stroke="#1f86d6" stroke-width="1.100"/>
<path d="M875.4 254 V297.300 H918.600" fill="none" stroke="#3d3d3d" stroke-width="1"/>
<path d="M881.100 259 L892.700 284 L912.300 259 L901.900 287.800" fill="none" stroke="#1f86d6" stroke-width="1.100"/>
<path d="M885.900 289.800 L895.900 269.600 L915.300 293 L913.200 279.200" fill="none" stroke="#3d3d3d" stroke-width="1.100"/>
<g fill="#fff" stroke="#1f86d6" stroke-width="1.100"><circle cx="881.100" cy="259" r="2.200"/><circle cx="912.300" cy="259" r="2.200"/><circle cx="901.900" cy="287.800" r="2.200"/></g>
<g fill="#3d3d3d"><circle cx="885.900" cy="289.800" r="2.900"/><circle cx="895.900" cy="269.600" r="2.900"/><circle cx="913.200" cy="279.200" r="2.900"/></g>
<path d="M945.700 254 V297.300 H988.700" fill="none" stroke="#3d3d3d" stroke-width="1"/>
<path d="M949.700 258.400 L961.800 284.400 L982.400 258.800 L977.600 287.300" fill="none" stroke="#1f86d6" stroke-width="1.100"/>
<path d="M954.100 291.100 L966.200 271.500 L985.500 293 L983.900 279.600" fill="none" stroke="#3d3d3d" stroke-width="1.100"/>
<path d="M875.500 374.200 V417.300 H918.900" fill="none" stroke="#3d3d3d" stroke-width="1"/>
<g fill="#3d3d3d"><circle cx="893.100" cy="384.600" r="8.200"/><circle cx="907.800" cy="394.100" r="5.100"/></g>
<g fill="#7db8ea" stroke="#1e6fbf" stroke-width="1.100"><circle cx="888.400" cy="402.600" r="7.200"/><circle cx="904.400" cy="407.300" r="6.200"/></g>
<defs><radialGradient id="sp" cx="0.38" cy="0.32" r="0.7"><stop offset="0" stop-color="#fff"/><stop offset="0.25" stop-color="#c9c9c9"/><stop offset="0.7" stop-color="#6a6a6a"/><stop offset="1" stop-color="#3a3a3a"/></radialGradient><radialGradient id="sd" cx="0.38" cy="0.32" r="0.7"><stop offset="0" stop-color="#fff"/><stop offset="0.2" stop-color="#9a9a9a"/><stop offset="0.6" stop-color="#3a3a3a"/><stop offset="1" stop-color="#1c1c1c"/></radialGradient></defs>
<path d="M945.700 374.200 V417.300 H988.600" fill="none" stroke="#3d3d3d" stroke-width="1"/>
<circle cx="962" cy="385.300" r="8" fill="url(#sd)"/><circle cx="977.500" cy="394.900" r="4.600" fill="url(#sd)"/><circle cx="957.600" cy="403.100" r="7.700" fill="url(#sp)"/><circle cx="973.600" cy="407.800" r="6.700" fill="url(#sp)"/>
<path d="M876.400 450.100 V469.400 H895.800" fill="none" stroke="#3d3d3d" stroke-width="1.300"/>
<g fill="#3d3d3d"><circle cx="883.500" cy="455" r="2.400"/><circle cx="892.300" cy="456.500" r="2.400"/><circle cx="891.100" cy="463.800" r="2.400"/></g>
<circle cx="882.100" cy="462.600" r="1.800" fill="#fff" stroke="#1f86d6" stroke-width="1.300"/>
</svg>
<div class="a" style="left:907.500px;top:468px;width:12.200px;height:1px;background:#242424"></div>
<div class="red" style="left:142.700px;top:0.200px;width:65.700px;height:31px"></div>
<div class="red" style="left:859.500px;top:100px;width:52px;height:35px"></div>
<div class="red" style="left:863.400px;top:174.300px;width:65.300px;height:62.500px;border-radius:7px"></div>
<div class="badge" style="left:216.500px;top:0.600px;width:42.800px;height:42.800px;line-height:42.800px"><b>2</b></div>
<div class="badge" style="left:813.800px;top:96.200px;width:42.600px;height:42.600px;line-height:42.600px"><b>3</b></div>
<div class="badge" style="left:813.750px;top:182.650px;width:43.500px;height:43.500px;line-height:43.500px"><b>4</b></div>
<div class="t" style="left:879.10px;top:144.90px;font-size:14.2px;font-weight:bold;color:#1a1a1a;">Scatter</div>
<div class="t" style="left:879.90px;top:335.90px;font-size:14.2px;font-weight:bold;letter-spacing:-0.037px;color:#1a1a1a;">Bubble</div>
<div class="t" style="left:906.30px;top:453.90px;font-size:14.2px;letter-spacing:0.061px;">More Scatter Charts...</div>
</body></html>
